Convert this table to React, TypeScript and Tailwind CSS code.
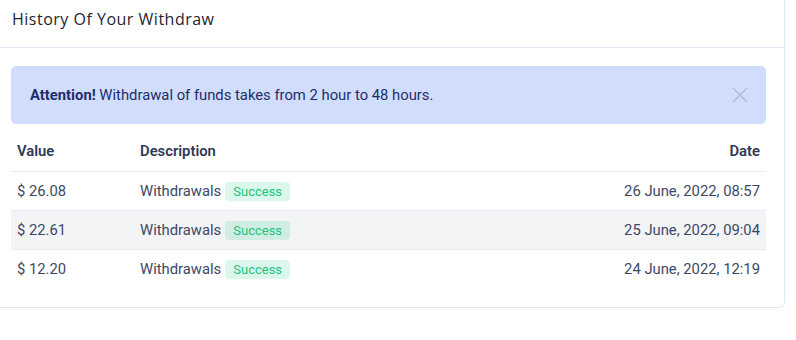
const rows = [
  { value: "$ 26.08", date: "26 June, 2022, 08:57" },
  { value: "$ 22.61", date: "25 June, 2022, 09:04" },
  { value: "$ 12.20", date: "24 June, 2022, 12:19" },
];

const App = () => {
  return (
    <div className="w-[796px] h-[340px] bg-white overflow-hidden font-['Roboto',sans-serif]">
      <section className="w-[793px] -ml-[8px] border-r border-b border-l border-[#e2e8f2] rounded-b-md bg-white">
        <div className="h-[48px] border-b border-[#e2e8f2] pl-[19px] pt-[8px]">
          <h2 className="font-['Open_Sans',sans-serif] font-medium text-[16px] leading-[22px] tracking-[0.5px] text-[#1f2430]">
            History Of Your Withdraw
          </h2>
        </div>

        <div className="pl-[18px] pr-[18px] pt-[18px] pb-[18px]">
          <div className="h-[58px] rounded-[5px] bg-[#d1ddfc] flex items-center justify-between pl-[19px] pr-[17px]">
            <p className="text-[14.8px] text-[#1f2d6e]">
              <strong className="font-bold">Attention!</strong> Withdrawal of
              funds takes from 2 hour to 48 hours.
            </p>
            <button type="button" className="text-[#b5bcd9]">
              <svg width="18" height="18" viewBox="0 0 18 18" fill="none" stroke="currentColor" strokeWidth="1.6">
                <path d="M2 2 L16 16 M16 2 L2 16" />
              </svg>
            </button>
          </div>

          <div className="mt-[8px] text-[14.8px]">
            <div className="flex items-center h-[40px] border-b border-[#e6ebf3] px-[6px] font-semibold text-[#2f3a55]">
              <span className="w-[123px]">Value</span>
              <span className="flex-1">Description</span>
              <span>Date</span>
            </div>
            {rows.map((r, i) => (
              <div
                key={r.date}
                className={
                  i === 1
                    ? "flex items-center h-[39px] border-b border-[#e6ebf3] px-[6px] text-[#3d4866] bg-[#f3f4f6]"
                    : i === 2
                    ? "flex items-center h-[39px] px-[6px] text-[#3d4866]"
                    : "flex items-center h-[39px] border-b border-[#e6ebf3] px-[6px] text-[#3d4866]"
                }
              >
                <span className="w-[123px]">{r.value}</span>
                <span className="flex-1 flex items-center gap-[4px]">
                  Withdrawals
                  <span className="h-[19px] px-[8px] rounded-[4px] bg-[#10c77f]/15 text-[#1bc47d] text-[13px] leading-[19px]">
                    Success
                  </span>
                </span>
                <span>{r.date}</span>
              </div>
            ))}
          </div>
        </div>
      </section>
    </div>
  );
};

export default App;
